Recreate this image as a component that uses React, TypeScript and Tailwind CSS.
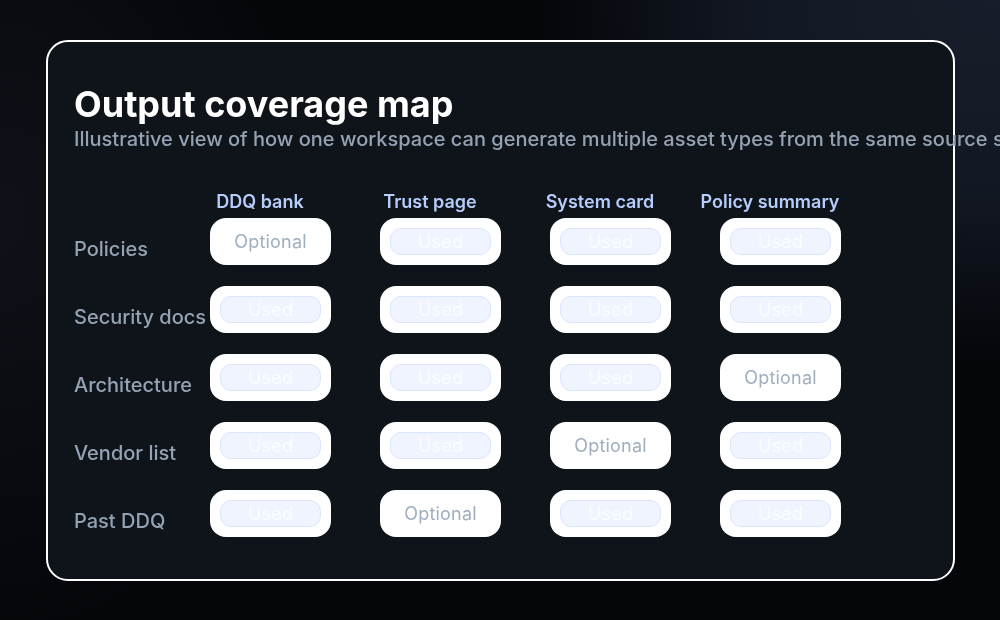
const columns = ["DDQ bank", "Trust page", "System card", "Policy summary"];

const rows = [
  { label: "Policies", cells: [false, true, true, true] },
  { label: "Security docs", cells: [true, true, true, true] },
  { label: "Architecture", cells: [true, true, true, false] },
  { label: "Vendor list", cells: [true, true, false, true] },
  { label: "Past DDQ", cells: [true, false, true, true] },
];

const Cell = ({ used }: { used: boolean }) => {
  return (
    <div className="mr-[49px] flex h-[47px] w-[121px] items-center justify-center rounded-[16px] bg-white">
      {used ? (
        <span className="flex h-[27px] w-[101px] items-center justify-center rounded-[11px] border border-[#dbe6fe] bg-[#eff4ff] text-[18px] tracking-[0.2px] text-[#fbfcff]">
          Used
        </span>
      ) : (
        <span className="text-[18px] tracking-[0.2px] text-[#a0aebf]">Optional</span>
      )}
    </div>
  );
};

export default function App() {
  return (
    <div className="h-[620px] w-[1000px] overflow-hidden bg-[#05060a] bg-[radial-gradient(ellipse_460px_360px_at_100%_0%,#171d2a_0%,#131924_50%,transparent_100%),radial-gradient(ellipse_300px_420px_at_0%_35%,#0e1218_0%,transparent_100%)] px-[46px] pt-[40px] font-['Inter',sans-serif]">
      <div className="h-[541px] w-[909px] rounded-[22px] border-2 border-white bg-[#0f141b] px-[26px] pt-[40px] will-change-transform">
        <h1 className="text-[36px] leading-[44px] font-bold text-white">Output coverage map</h1>
        <p className="mt-[1px] text-[20px] leading-[24px] font-medium whitespace-nowrap text-[#94a3b4]">
          Illustrative view of how one workspace can generate multiple asset types from the same source set.
        </p>
        <div className="mt-[39px] flex pl-[126px]">
          {columns.map((name) => (
            <div key={name} className="mr-[50px] flex w-[120px] justify-center text-[18px] leading-[24px] font-semibold whitespace-nowrap text-[#b6ccfa]">
              {name}
            </div>
          ))}
        </div>
        <div className="mt-[4px] flex flex-col gap-[21px]">
          {rows.map((row) => (
            <div key={row.label} className="flex">
              <div className="w-[136px] pt-[17px] text-[20px] leading-[28px] font-medium whitespace-nowrap text-[#94a3b4]">
                {row.label}
              </div>
              {row.cells.map((used, i) => (
                <Cell key={i} used={used} />
              ))}
            </div>
          ))}
        </div>
      </div>
    </div>
  );
}
